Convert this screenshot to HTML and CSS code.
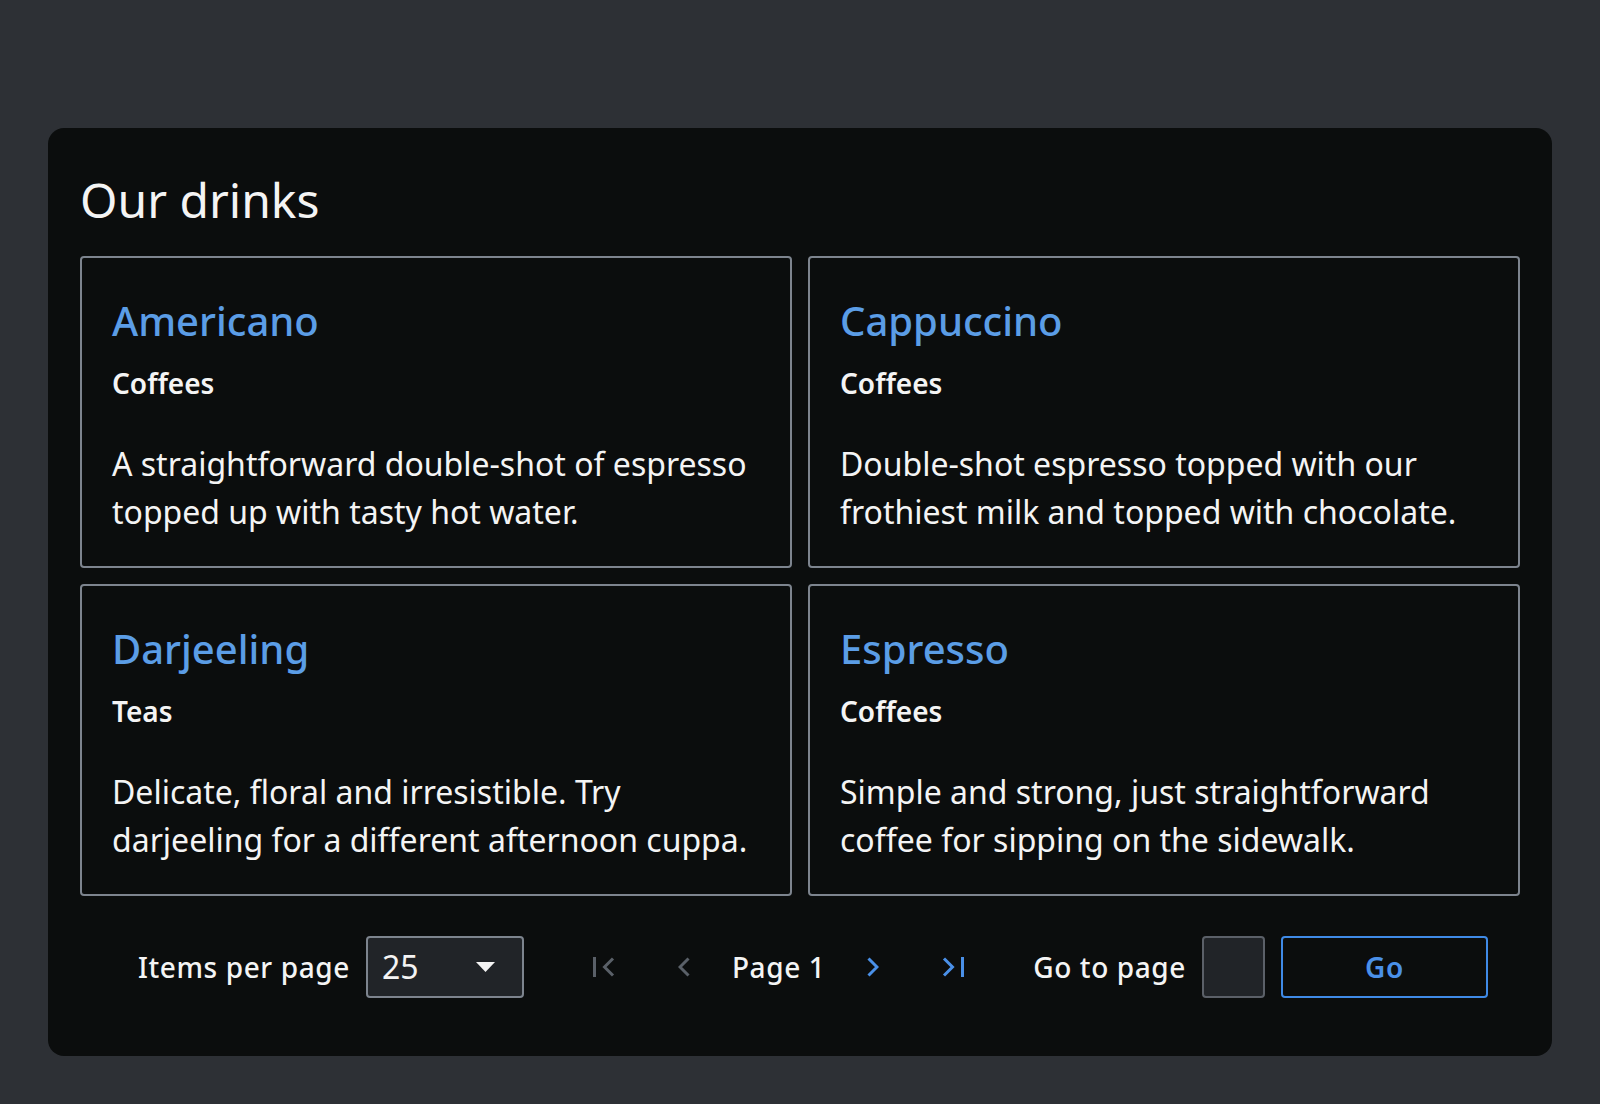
FILE: index.html
```html
<!DOCTYPE html>
<html lang="en">
<head>
<meta charset="utf-8">
<title>Our drinks</title>
<link rel="stylesheet" href="styles.css">
</head>
<body>
<main class="panel">
  <h2 class="panel-title">Our drinks</h2>
  <div class="grid">
    <article class="card">
      <h3 class="card-title">Americano</h3>
      <p class="card-cat">Coffees</p>
      <p class="card-desc">A straightforward double-shot of espresso topped up with tasty hot water.</p>
    </article>
    <article class="card">
      <h3 class="card-title">Cappuccino</h3>
      <p class="card-cat">Coffees</p>
      <p class="card-desc">Double-shot espresso topped with our frothiest milk and topped with chocolate.</p>
    </article>
    <article class="card">
      <h3 class="card-title">Darjeeling</h3>
      <p class="card-cat">Teas</p>
      <p class="card-desc">Delicate, floral and irresistible. Try darjeeling for a different afternoon cuppa.</p>
    </article>
    <article class="card">
      <h3 class="card-title">Espresso</h3>
      <p class="card-cat">Coffees</p>
      <p class="card-desc">Simple and strong, just straightforward coffee for sipping on the sidewalk.</p>
    </article>
  </div>
  <nav class="pager">
    <div class="pager-group">
      <span class="pager-label">Items per page</span>
      <div class="select">
        <span class="select-value">25</span>
        <svg class="select-caret" width="19" height="10" viewBox="0 0 19 10"><polygon points="0,0 19,0 9.5,10" fill="#f4f4f4"/></svg>
      </div>
    </div>
    <div class="pager-group">
      <span class="icon-btn">
        <svg width="22" height="20" viewBox="0 0 22 20"><rect x="0" y="0" width="3" height="20" fill="#5a6068"/><polyline points="20,1.5 11.5,10 20,18.5" fill="none" stroke="#5a6068" stroke-width="3"/></svg>
      </span>
      <span class="icon-btn">
        <svg width="12" height="20" viewBox="0 0 12 20"><polyline points="10.5,1.5 2,10 10.5,18.5" fill="none" stroke="#5a6068" stroke-width="3"/></svg>
      </span>
      <span class="pager-label page-num">Page 1</span>
      <span class="icon-btn">
        <svg width="12" height="20" viewBox="0 0 12 20"><polyline points="1.5,1.5 10,10 1.5,18.5" fill="none" stroke="#4a90e8" stroke-width="3"/></svg>
      </span>
      <span class="icon-btn">
        <svg width="22" height="20" viewBox="0 0 22 20"><polyline points="2,1.5 10.5,10 2,18.5" fill="none" stroke="#4a90e8" stroke-width="3"/><rect x="19" y="0" width="3" height="20" fill="#4a90e8"/></svg>
      </span>
    </div>
    <div class="pager-group">
      <span class="pager-label">Go to page</span>
      <span class="page-input"></span>
      <button class="go-btn" type="button">Go</button>
    </div>
  </nav>
</main>
</body>
</html>
```

FILE: styles.css
```css
html, body {
  margin: 0;
  padding: 0;
}

body {
  background: #2d3035;
  font-family: "Noto Sans", "Open Sans", sans-serif;
  color: #f4f4f4;
}

.panel {
  margin: 128px 48px 48px;
  padding: 34px 32px 58px;
  background: #0b0d0d;
  border-radius: 16px;
}

.panel-title {
  margin: 0 0 18px;
  font-size: 48px;
  font-weight: 400;
  line-height: 76px;
  color: #f4f4f4;
}

.grid {
  display: grid;
  grid-template-columns: 1fr 1fr;
  gap: 16px 16px;
}

.card {
  border: 2px solid #7d848e;
  border-radius: 4px;
  padding: 33px 30px 30px;
}

.card-title {
  margin: 0 0 11px;
  font-size: 40px;
  font-weight: 500;
  line-height: 60px;
  color: #5b9de6;
}

.card-cat {
  margin: 0 0 36px;
  font-size: 28px;
  font-weight: 600;
  line-height: 42px;
  color: #f4f4f4;
}

.card-desc {
  margin: 0;
  font-size: 32px;
  font-weight: 400;
  line-height: 48px;
  color: #f4f4f4;
}

.pager {
  margin-top: 40px;
  padding-right: 32px;
  display: flex;
  justify-content: flex-end;
  align-items: center;
  gap: 48px;
}

.pager-group {
  display: flex;
  align-items: center;
  gap: 16px;
}

.pager-label {
  font-size: 28px;
  font-weight: 500;
  line-height: 42px;
  color: #f4f4f4;
  letter-spacing: 0.6px;
}

.select {
  box-sizing: border-box;
  width: 158px;
  height: 62px;
  border: 2px solid #7d848e;
  border-radius: 4px;
  background: #212428;
  display: flex;
  align-items: center;
  justify-content: space-between;
  padding: 0 27px 0 14px;
}

.select-value {
  font-size: 32px;
  line-height: 42px;
  color: #f4f4f4;
}

.icon-btn {
  width: 64px;
  height: 62px;
  display: flex;
  align-items: center;
  justify-content: center;
}

.page-input {
  box-sizing: border-box;
  width: 63px;
  height: 62px;
  border: 2px solid #5b6068;
  border-radius: 4px;
  background: #212428;
}

.go-btn {
  box-sizing: border-box;
  width: 207px;
  height: 62px;
  border: 2px solid #3f8ae6;
  border-radius: 4px;
  background: transparent;
  font-family: "Noto Sans", "Open Sans", sans-serif;
  font-size: 28px;
  font-weight: 600;
  color: #4a90e8;
  letter-spacing: 0.6px;
  padding: 0;
}
```
